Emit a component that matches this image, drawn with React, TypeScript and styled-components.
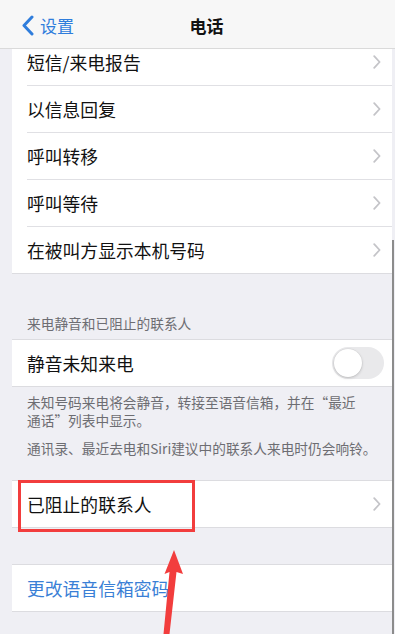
import React from "react";
import styled, { createGlobalStyle } from "styled-components";

const GlobalStyle = createGlobalStyle`
  html, body { margin: 0; padding: 0; background: #efeff4; }
  body {
    font-family: "Noto Sans CJK SC", "Noto Sans", "Liberation Sans", sans-serif;
    -webkit-font-smoothing: antialiased;
  }
  * { box-sizing: border-box; }
`;

const Screen = styled.div`
  position: relative;
  width: 395px;
  height: 634px;
  overflow: hidden;
  background: #efeff4;
  display: flex;
  flex-direction: column;
`;

const NavBar = styled.div`
  height: 49px;
  flex: none;
  background: #f7f7f7;
  border-bottom: 1px solid #dadada;
  display: grid;
  grid-template-columns: 1fr auto 1fr;
  align-items: center;
  padding-left: 18px;
  position: relative;
  z-index: 2;
`;

const Back = styled.div`
  display: flex;
  align-items: center;
  gap: 6px;
  padding-left: 4px;
  color: #2f7ddc;
  font-size: 17px;
  margin-top: 2px;
`;

const Title = styled.div`
  font-size: 17px;
  font-weight: 700;
  color: #111;
  margin-top: 2px;
`;

const Scroller = styled.div`
  flex: 1;
  overflow: hidden;
  padding: 0 3px 0 12px;
`;

const Inner = styled.div`
  margin-top: -11px;
  display: flex;
  flex-direction: column;
`;

const Group = styled.div<{ $mt?: number }>`
  background: #fff;
  border-top: 1px solid #dcdce0;
  border-bottom: 1px solid #dcdce0;
  margin-top: ${(p) => p.$mt ?? 0}px;
`;

const Row = styled.div`
  padding-left: 15px;
  display: flex;
`;

const RowContent = styled.div<{ $divider?: boolean }>`
  flex: 1;
  height: ${(p) => (p.$divider ? 47 : 46)}px;
  display: flex;
  align-items: center;
  justify-content: space-between;
  padding-right: 11px;
  border-bottom: ${(p) => (p.$divider ? "1px solid #e0e0e4" : "none")};
`;

const Label = styled.span<{ $link?: boolean }>`
  font-size: 17.8px;
  color: ${(p) => (p.$link ? "#3a7fd6" : "#111")};
  letter-spacing: 0;
`;

const SectionHeader = styled.div`
  margin-top: 40px;
  padding: 0 0 7px 15px;
  font-size: 13.7px;
  line-height: 18px;
  color: #6d6d72;
`;

const Footer = styled.div`
  padding: 6px 8px 0 15px;
  font-size: 13.7px;
  line-height: 18px;
  color: #6d6d72;
  display: flex;
  flex-direction: column;
  gap: 10px;
`;

const FooterPara = styled.p`
  margin: 0;
`;

const Toggle = styled.div`
  width: 52px;
  height: 32px;
  border-radius: 16px;
  background: #e9e9eb;
  padding: 2px;
  margin-right: -3px;
  display: flex;
`;

const Knob = styled.div`
  width: 28px;
  height: 28px;
  border-radius: 50%;
  background: #fff;
  box-shadow: 0 1px 3px rgba(0, 0, 0, 0.18), 0 0 0 0.5px rgba(0, 0, 0, 0.06);
`;

const Highlight = styled.div`
  position: absolute;
  left: 18px;
  top: 480px;
  width: 177px;
  height: 52px;
  border: 3px solid #f23d3d;
  pointer-events: none;
`;

const ArrowSvg = styled.svg`
  position: absolute;
  left: 0;
  top: 0;
  pointer-events: none;
`;

const ScrollIndicator = styled.div`
  position: absolute;
  left: 392px;
  top: 240px;
  bottom: 0;
  width: 1.5px;
  background: #8c8c8c;
`;

const Chevron = () => (
  <svg width="8" height="14" viewBox="0 0 8 14">
    <path d="M1.2 1.2 L6.6 7 L1.2 12.8" fill="none" stroke="#c4c4c8" strokeWidth="1.8" strokeLinecap="round" strokeLinejoin="round" />
  </svg>
);

const BackChevron = () => (
  <svg width="12" height="21" viewBox="0 0 12 21">
    <path d="M10 2 L2 10.5 L10 19" fill="none" stroke="#2f7ddc" strokeWidth="3" strokeLinecap="round" strokeLinejoin="round" />
  </svg>
);

const topItems = ["短信/来电报告", "以信息回复", "呼叫转移", "呼叫等待", "在被叫方显示本机号码"];

export default function App() {
  return (
    <>
      <GlobalStyle />
      <Screen>
        <NavBar>
          <Back>
            <BackChevron />
            <span>设置</span>
          </Back>
          <Title>电话</Title>
          <div />
        </NavBar>
        <Scroller>
          <Inner>
            <Group>
              {topItems.map((t, i) => (
                <Row key={t}>
                  <RowContent $divider={i < topItems.length - 1}>
                    <Label>{t}</Label>
                    <Chevron />
                  </RowContent>
                </Row>
              ))}
            </Group>
            <SectionHeader>来电静音和已阻止的联系人</SectionHeader>
            <Group>
              <Row>
                <RowContent>
                  <Label>静音未知来电</Label>
                  <Toggle>
                    <Knob />
                  </Toggle>
                </RowContent>
              </Row>
            </Group>
            <Footer>
              <FooterPara>
                未知号码来电将会静音，转接至语音信箱，并在“最近
                <br />
                通话”列表中显示。
              </FooterPara>
              <FooterPara>通讯录、最近去电和Siri建议中的联系人来电时仍会响铃。</FooterPara>
            </Footer>
            <Group $mt={23}>
              <Row>
                <RowContent>
                  <Label>已阻止的联系人</Label>
                  <Chevron />
                </RowContent>
              </Row>
            </Group>
            <Group $mt={36}>
              <Row>
                <RowContent>
                  <Label $link>更改语音信箱密码</Label>
                </RowContent>
              </Row>
            </Group>
          </Inner>
        </Scroller>
        <ScrollIndicator />
        <Highlight />
        <ArrowSvg width="395" height="634" viewBox="0 0 395 634">
          <polygon
            points="174,550 183,574 176.5,572 169.5,634 163.5,634 169.5,572 164.5,574"
            fill="#f23d3d"
          />
        </ArrowSvg>
      </Screen>
    </>
  );
}
